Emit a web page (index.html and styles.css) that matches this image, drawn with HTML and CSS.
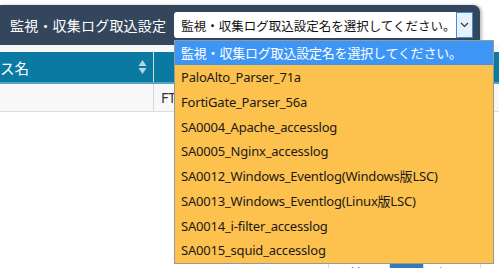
FILE: index.html
```html
<!DOCTYPE html>
<html lang="ja">
<head>
    <meta charset="UTF-8">
    <meta name="viewport" content="width=device-width, initial-scale=1.0">
    <title>監視・収集ログ取込設定</title>
    <link rel="stylesheet" href="styles.css">
</head>
<body>
    <div class="topbar">
        <span class="topbar-label">監視・収集ログ取込設定</span>
        <div class="select-box">
            <span class="select-text">監視・収集ログ取込設定名を選択してください。</span>
            <span class="select-arrow">
                <svg width="9" height="6" viewBox="0 0 9 6"><path d="M1 1 L4.5 4.5 L8 1" fill="none" stroke="#333" stroke-width="1.2"/></svg>
            </span>
        </div>
    </div>

    <div class="spacer"></div>

    <div class="grid">
        <div class="grid-head">
            <div class="col col-name">ス名
                <svg class="sort-icon" width="9" height="16" viewBox="0 0 9 16"><path d="M4.5 1 L8.5 7 L0.5 7 Z M4.5 15 L8.5 9 L0.5 9 Z" fill="#b9d3df"/></svg>
            </div>
            <div class="col col-rest"></div>
        </div>
        <div class="grid-row">
            <div class="col col-name"></div>
            <div class="col col-rest">FT</div>
        </div>
    </div>

    <div class="pager">
        <span class="pager-item pager-prev">« 前へ</span>
        <span class="pager-item pager-active">1</span>
        <span class="pager-item">次へ »</span>
    </div>

    <ul class="dropdown">
        <li class="selected">監視・収集ログ取込設定名を選択してください。</li>
        <li>PaloAlto_Parser_71a</li>
        <li>FortiGate_Parser_56a</li>
        <li>SA0004_Apache_accesslog</li>
        <li>SA0005_Nginx_accesslog</li>
        <li>SA0012_Windows_Eventlog(Windows版LSC)</li>
        <li>SA0013_Windows_Eventlog(Linux版LSC)</li>
        <li>SA0014_i-filter_accesslog</li>
        <li>SA0015_squid_accesslog</li>
    </ul>
</body>
</html>
```

FILE: styles.css
```css
body { margin: 0; background: #fff; font-family: "Noto Sans", "Noto Sans CJK JP", sans-serif; color: #222; overflow: hidden; }

.topbar { margin-top: 5px; width: 470px; height: 40px; padding-left: 10px; background: #34465b; border-top-right-radius: 7px; display: flex; align-items: center; box-shadow: 2px 0 3px rgba(0, 0, 0, 0.25); }
.topbar-label { color: #fff; font-size: 14px; margin-right: 8px; letter-spacing: 0.2px; white-space: nowrap; }
.select-box { width: 299px; flex-shrink: 0; height: 26px; background: #fff; border-radius: 3px; display: flex; align-items: center; }
.select-text { flex: 1; min-width: 0; overflow: hidden; font-size: 12.5px; padding-left: 7px; color: #111; white-space: nowrap; }
.select-arrow { flex-shrink: 0; width: 15px; height: 24px; border: 1px solid #3b8ee0; background: #e6f1fb; display: flex; align-items: center; justify-content: center; }

.spacer { height: 7px; background: #f7f7f7; }

.grid-head { display: flex; height: 30px; background: #0b7aa3; border-bottom: 2px solid #5aa3c0; color: #fff; font-size: 14.5px; }
.grid-row { display: flex; height: 27px; background: #f8f8f8; border-bottom: 1px solid #ddd; font-size: 14px; }
.col { display: flex; align-items: center; }
.col-name { width: 154px; border-right: 1px solid #d6d9dc; justify-content: space-between; padding-right: 6px; box-sizing: border-box; }
.col-rest { flex: 1; padding-left: 7px; color: #333; }

.pager { display: flex; margin-top: 149px; margin-left: 328px; font-size: 13px; line-height: 18px; }
.pager-item { padding: 2px 10px; border: 1px solid #ddd; color: #555; }
.pager-prev { width: 40px; }
.pager-active { background: #337ab7; border-color: #337ab7; color: #fff; padding: 2px 12px; }

.dropdown { position: absolute; left: 174px; top: 40px; width: 318px; margin: 0; padding: 0; list-style: none; background: #fdc14e; border: 1px solid #999; font-size: 13px; letter-spacing: -0.2px; }
.dropdown li { height: 24.75px; line-height: 24.75px; padding-left: 6px; white-space: nowrap; color: #1a1a1a; }
.dropdown li.selected { background: #3d96f5; color: #fff; height: 24px; line-height: 24px; }
```
